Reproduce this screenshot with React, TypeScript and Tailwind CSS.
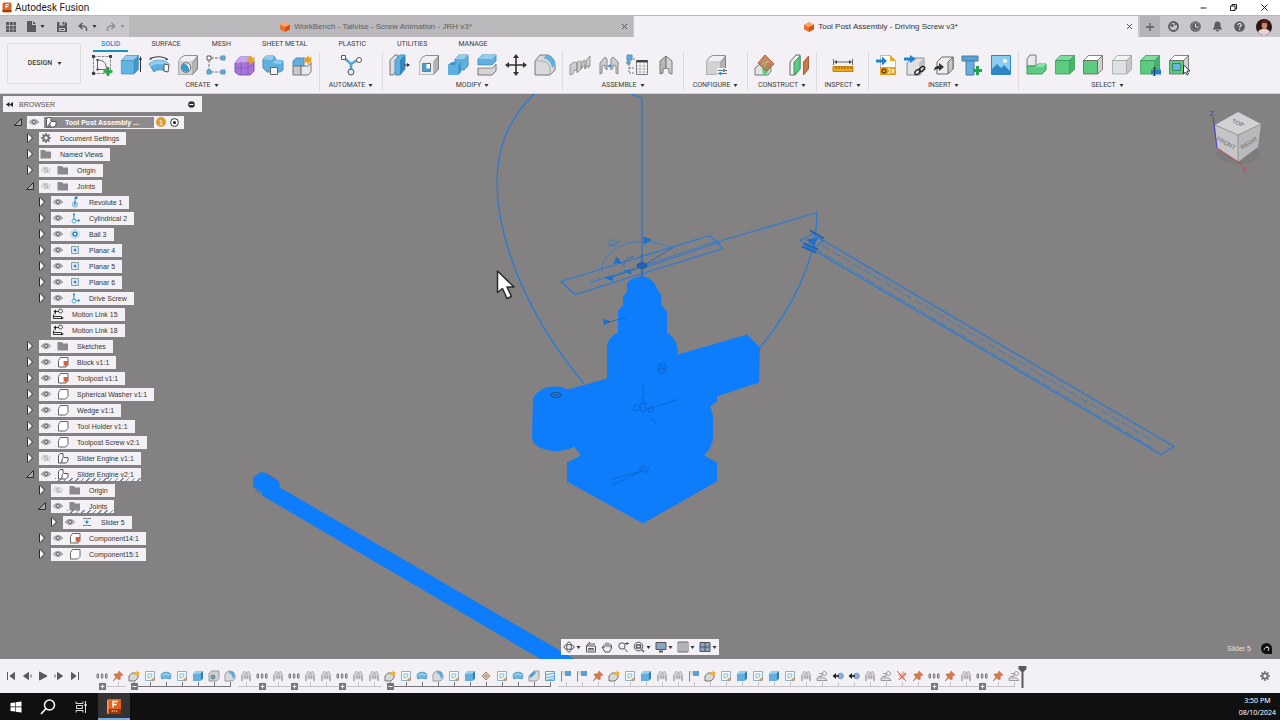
import React from "react";

type SvgProps = { size?: string; box?: string; children: React.ReactNode };

function Svg({ size = "size-[22px]", box = "0 0 22 22", children }: SvgProps) {
  return (
    <svg className={size + " shrink-0"} viewBox={box} fill="none" aria-hidden="true">
      {children}
    </svg>
  );
}

function Caret({ tone = "text-[#333]" }: { tone?: string }) {
  return (
    <svg className={"h-[3px] w-[5px] shrink-0 " + tone} viewBox="0 0 5 3" aria-hidden="true">
      <path d="M0.5 0h4L2.5 3z" fill="currentColor" />
    </svg>
  );
}

type CubeProps = { front: string; top: string; side: string; line?: string };

function Cube({ front, top, side, line = "#777" }: CubeProps) {
  return (
    <g stroke={line} strokeWidth="0.8" strokeLinejoin="round">
      <path d="M1.5 6.5 6.5 1.5h14L15.5 6.5z" fill={top} />
      <path d="M15.5 6.5l5-5v14l-5 4.5z" fill={side} />
      <path d="M1.5 6.5h14V20h-14z" fill={front} />
    </g>
  );
}

function RoundCube({ front = "#d2d2d4" }: { front?: string }) {
  return (
    <g stroke="#77777a" strokeWidth="0.8" strokeLinejoin="round">
      <path d="M1.5 8 4 3.500 7.500 1.500h13v13.500L15.500 20.500h-14z" fill="#f0f0f1" />
      <path d="M15.500 8l5-6v13l-5 5.500z" fill="#b3b3b6" />
      <path d="M1.500 8 4 7h11.500v13.500h-14z" fill={front} stroke="none" />
    </g>
  );
}

const blue = { front: "#62b4e4", top: "#93cdee", side: "#3f97cc", line: "#4a93c0" };
const green = { front: "#5ccb80", top: "#7fdc9d", side: "#46b56c", line: "#3f9a5e" };

const ribbonArt: Record<string, React.ReactNode> = {
  sketch: (
    <>
      <path d="M2.500 2.500h17v17h-17z" stroke="#888" strokeDasharray="3 1" />
      <path d="M6.500 6v9.500M6.500 6c6 0 9 3 9 9.500h-9" stroke="#666" />
      <path d="M1 1h3v3H1zM18 1h3v3h-3zM1 18h3v3H1zM5.500 5h2v2h-2zM5.500 14.500h2v2h-2z" fill="#444" />
      <path d="M17 13v9M12.500 17.500h9" stroke="#22a447" strokeWidth="2.600" />
    </>
  ),
  extrude: (
    <>
      <g transform="scale(0.900 1)">
        <Cube {...blue} />
      </g>
      <path d="M20.500 18V5" stroke="#333" />
      <path d="M19 6 20.500 2 22 6z" fill="#333" />
    </>
  ),
  revolve: (
    <>
      <path d="M1 10c4-5 16-5 20 0l-3 8c-3-3-9-3-12 0z" fill="#5fb0e0" stroke="#4a93c0" />
      <path d="M1 10c4-5 16-5 20 0l-1.500 3c-4-4-13-4-17 0z" fill="#93cdee" />
      <path d="M16 10l5 1-1 7-4-1z" fill="#fff" stroke="#555" />
      <path d="M2 5c5-3 12-3 17 0" stroke="#333" />
      <path d="M1 6l2-3 1 2zM20 6l-3 0 2-2z" fill="#333" />
    </>
  ),
  hole: (
    <>
      <RoundCube />
      <circle cx="9" cy="13.500" r="4.800" fill="#f4f8fb" stroke="#666" />
      <path d="M6.500 9.500c3 0 6 3 5.500 7.500A4.500 4.500 0 0 1 6.500 9.500z" fill="#3f97cc" />
    </>
  ),
  pattern: (
    <>
      <path d="M6 4h10M4 6v10M6 18h10" stroke="#777" strokeDasharray="3 1" />
      <path d="M2 2h4v4H2z" fill="#fff" stroke="#555" />
      <path d="M16 2h4v4h-4zM2 16h4v4H2zM16 16h4v4h-4z" fill="#5fb0e0" stroke="#4a93c0" />
    </>
  ),
  form: (
    <>
      <path d="M1 9l5-6h11l3 4v10l-4 4H5l-4-3z" fill="#a875dd" stroke="#7f52b5" />
      <path d="M1 9l5-6h11l-4 5z" fill="#c9a4f0" />
      <path d="M7 8v13M1 14h13l6-4M14 8v13" stroke="#8455bd" strokeWidth="0.800" />
      <path d="M17 1l1.200 3 3-1-1.400 3 1.400 3-3-1-1.200 3-1.200-3-3 1 1.400-3-1.400-3 3 1z" fill="#e8a020" />
    </>
  ),
  derive: (
    <>
      <path d="M1 5l3-3h8l2 4 7 1v9l-3 2H5l-4-4z" fill="#5fb0e0" stroke="#4a93c0" />
      <path d="M1 5l3-3h8l-2 4zM10 9l4-3 7 1-3 3z" fill="#93cdee" />
      <path d="M8.500 13.500h7v7h-7z" fill="#f4f4f5" stroke="#666" />
    </>
  ),
  component: (
    <>
      <path d="M2 7l3-3h8v8H2z" fill="#5fb0e0" stroke="#4a93c0" />
      <path d="M2 12h8v9H2z" fill="#c9c9cb" stroke="#777" />
      <path d="M10 12h7l3-3v9l-3 3h-7z" fill="#e9e9ea" stroke="#777" />
      <path d="M17 1l1.200 3 3-1-1.400 3 1.400 3-3-1-1.200 3-1.200-3-3 1 1.400-3-1.400-3 3 1z" fill="#e8a020" />
    </>
  ),
  automate: (
    <>
      <path d="M3 3l8 7 8-5M11 10v8" stroke="#56a5d6" strokeWidth="2.600" />
      <path d="M1.500 1.500h4v4h-4z" fill="#fff" stroke="#555" />
      <circle cx="19" cy="6" r="2.500" fill="#fff" stroke="#555" />
      <circle cx="11" cy="18" r="3" fill="#d8e9f4" stroke="#555" />
    </>
  ),
  press: (
    <>
      <path d="M1 6l5-5h3v14l-5 6H1z" fill="#dcdcde" stroke="#777" />
      <path d="M6 6l5-5h5v14l-5 6H6z" fill="#5fb0e0" stroke="#4a93c0" />
      <path d="M11 6l5-5v14l-5 6z" fill="#3487bd" />
      <path d="M15 11h5" stroke="#333" />
      <path d="M18 9l3 2-3 2z" fill="#333" />
    </>
  ),
  shell: (
    <>
      <RoundCube front="#ececed" />
      <path d="M4.500 9.500h8v8h-8z" fill="#fff" stroke="#666" />
      <path d="M4.500 9.500v8l4-3v-5zM4.500 17.500l4-3h4v3z" fill="#4a9fd2" />
    </>
  ),
  combine: (
    <>
      <path d="M8 5l4-4h9v11l-4 4H8z" fill="#5fb0e0" stroke="#4a93c0" />
      <path d="M8 5l4-4h9l-4 4z" fill="#93cdee" />
      <path d="M1 11l4-3h9v10l-3 3H1z" fill="#5fb0e0" />
      <path d="M1 11l4-3h5l-2 3zM14 8v10l-3 3V11z" fill="#3f97cc" />
    </>
  ),
  split: (
    <>
      <path d="M2 5l4-4h14v6l-4 4H2z" fill="#5fb0e0" stroke="#4a93c0" />
      <path d="M2 5l4-4h14l-4 4z" fill="#93cdee" />
      <path d="M2 14h14l4-4v7l-4 4H2z" fill="#d5d5d7" stroke="#777" />
      <path d="M0 12.500h16l5-5" stroke="#fff" strokeWidth="1.500" />
    </>
  ),
  move: (
    <>
      <path d="M11 3v16M3 11h16" stroke="#333" strokeWidth="1.600" />
      <path d="M11 0l3 4H8zM11 22l3-4H8zM0 11l4-3v6zM22 11l-4-3v6z" fill="#333" />
    </>
  ),
  fillet: (
    <>
      <path d="M1 7l5-6h8c5 2 7 6 7 10v5l-5 5H1z" fill="#dadadc" stroke="#777" />
      <path d="M9 4l4-3c5 1 8 5 8 10l-3 3c0-5-4-9-9-10z" fill="#5fb0e0" />
      <path d="M1 7h7c5 0 8 4 8 9v5" stroke="#aaa" />
    </>
  ),
  joints: (
    <path
      d="M1 21V11l4-3 3 1v8l-3-1-1 4zM8 19V8l4-1v8l2-8 2-1v9l2-10 3-3v10l-2 2v-3l-3 4v-4l-3 3z"
      fill="#cfcfd1"
      stroke="#858587"
      strokeWidth="0.800"
    />
  ),
  joint: (
    <>
      <path d="M2 20V9l5-6 2 2v11l-2-2v-3l-3 1v7z" fill="#cfcfd1" stroke="#858587" />
      <path d="M20 20V8l-5-5-2 2v11l2-2v-3l3 1v7z" fill="#cfcfd1" stroke="#858587" />
      <path d="M9 12l4-2v4z" fill="#3f97cc" />
    </>
  ),
  bom: (
    <>
      <path d="M1 1h5v5H1zM1 7h3v3H1z" fill="#5fb0e0" stroke="#4a93c0" />
      <path d="M3 10v9M3 14h5M3 19h5M7 5h3" stroke="#777" strokeDasharray="2 1" />
      <path d="M10.500 6.500h11v14h-11z" fill="#fff" stroke="#777" />
      <path d="M10.500 6h11v2.500h-11z" fill="#444" />
      <path d="M10.500 12h11M10.500 15h11M10.500 18h11M14 8v12M18 8v12" stroke="#aaa" strokeWidth="0.800" />
    </>
  ),
  rigid: (
    <>
      <path d="M5 20V7l6-5v12l-3 1v4z" fill="#b9b9bb" stroke="#777" />
      <path d="M17 20V7l-6-5v12l3 1v4z" fill="#d3d3d5" stroke="#777" />
    </>
  ),
  configure: (
    <>
      <RoundCube />
      <path d="M12 14h10v7H12z" fill="#f3f1f5" />
      <path d="M13 16.500h9M13 19.500h9" stroke="#666" />
      <path d="M18 15h2v3h-2zM14.500 18h2v3h-2z" fill="#3f97cc" />
    </>
  ),
  plane: (
    <>
      <path d="M1 14l6-5 10 1v7l-3 4H1z" fill="#e3e3e4" stroke="#777" />
      <path d="M8 13l6-3 3 3-5 8H9z" fill="#5ccb80" />
      <path d="M11 1l9 9-8 7-8-8z" fill="#c8784a" fillOpacity="0.850" stroke="#a85f38" />
      <path d="M8 10l7-3M10 13l4-6" stroke="#8fce9a" />
    </>
  ),
  midplane: (
    <>
      <path d="M2 8l6-7h4v14l-5 6H2z" fill="#f2f2f2" stroke="#666" />
      <path d="M6 8l6-6v13l-6 6z" fill="#5ccb80" stroke="#3f9a5e" />
      <path d="M15.500 8l5-6v13l-5 6z" fill="#c8784a" stroke="#a85f38" />
    </>
  ),
  measure: (
    <>
      <path d="M1.500 5v6M20.500 5v6M3 8h16" stroke="#666" />
      <path d="M2 8l3-2v4zM20 8l-3-2v4z" fill="#444" />
      <path d="M1 12.500h20v5H1z" fill="#f0a81c" stroke="#c4830d" />
      <path d="M4 13v2M7 13v2M10 13v2M13 13v2M16 13v2M19 13v2" stroke="#7a5200" />
    </>
  ),
  insertSvg: (
    <>
      <path d="M5.500 1.500h10l5 5v14h-15z" fill="#fdfdfd" stroke="#bbb" />
      <path d="M15 1l6 6h-6z" fill="#f0a81c" />
      <path d="M5 13h16v8H5z" fill="#eda11a" />
      <circle cx="9" cy="17" r="2" stroke="#6b4700" strokeWidth="1.300" />
      <path d="M13 15h2v4h-2M17 15l1 4 1-4" stroke="#fff" />
      <path d="M1 7h7" stroke="#1d84cf" strokeWidth="3" />
      <path d="M7 2.500 12 7l-5 4.500z" fill="#1d84cf" />
    </>
  ),
  insertLink: (
    <>
      <path d="M3 9l5-5h12v11l-4 6H3z" fill="#e2e2e3" stroke="#888" />
      <path d="M15 9l5-5v11l-5 5z" fill="#c0c0c2" />
      <ellipse cx="13.500" cy="18" rx="3" ry="2" transform="rotate(-40 13.500 18)" stroke="#222" strokeWidth="1.400" />
      <ellipse cx="18" cy="15" rx="3" ry="2" transform="rotate(-40 18 15)" stroke="#222" strokeWidth="1.400" />
      <path d="M0 5h7" stroke="#1d84cf" strokeWidth="3" />
      <path d="M6 1l6 4-6 4z" fill="#1d84cf" />
    </>
  ),
  insertBody: (
    <>
      <path d="M4 8l5-5h11v12l-5 5H4z" fill="#eeeeef" stroke="#666" />
      <path d="M15 8l5-5v12l-5 5z" fill="#c9c9cb" stroke="#666" />
      <path d="M1 17c0-4 2-5 5-5V9l5 4-5 4v-2c-2 0-4 0-5 2z" fill="#333" />
    </>
  ),
  fastener: (
    <>
      <path d="M1 2h16v5H1z" fill="#5d9fce" stroke="#3f7fae" />
      <path d="M5 7h8v14H5z" fill="#6caedb" stroke="#3f7fae" />
      <path d="M16.500 12v9M12 16.500h9" stroke="#22a447" strokeWidth="3" />
    </>
  ),
  image: (
    <>
      <path d="M1.500 1.500h19v19h-19z" fill="#8cccf0" stroke="#2e86c4" />
      <path d="M2 15l5-5 4 4 3-3 6 6v3H2z" fill="#2e86c4" />
      <circle cx="15" cy="7" r="2" fill="#fff" />
    </>
  ),
  selBody: (
    <>
      <path d="M2 5l3-4h6v11H2z" fill="#e9e9ea" stroke="#777" />
      <path d="M2 12h9l2-2h8v6l-4 4H2z" fill="#5ccb80" stroke="#3f9a5e" />
      <path d="M10 13l3-3h8l-3 3z" fill="#8be3a7" />
    </>
  ),
  selGreen: <Cube {...green} />,
  selFace: <Cube front="#5ccb80" top="#fff" side="#d0d0d2" line="#666" />,
  selNone: <Cube front="#dfe0e1" top="#f3f3f3" side="#c5c6c8" line="#99a59f" />,
  selRename: (
    <>
      <Cube {...green} />
      <path d="M12 15.500h10v5H12z" fill="#1d7fd6" />
      <path d="M14 14h3M15.500 14v8M14 22h3" stroke="#333" />
    </>
  ),
  selWindow: (
    <>
      <Cube front="#5ccb80" top="#fff" side="#d0d0d2" line="#666" />
      <path d="M4.500 9.500h8v7h-8z" fill="#69b6e6" stroke="#358a53" />
      <path d="M15.500 11v9l2-2 1.500 3 1.500-1-1.500-3h3z" fill="#fff" stroke="#333" />
    </>
  ),
};

type Group = { label: string; width: string; icons: [string, string][] };

const groups: Group[] = [
  {
    label: "CREATE",
    width: "w-[235px]",
    icons: [
      ["sketch", "Create Sketch"], ["extrude", "Extrude"], ["revolve", "Revolve"], ["hole", "Hole"],
      ["pattern", "Pattern"], ["form", "Create Form"], ["derive", "Derive"], ["component", "New Component"],
    ],
  },
  { label: "AUTOMATE", width: "w-[63px]", icons: [["automate", "Automated Modeling"]] },
  {
    label: "MODIFY",
    width: "w-[180px]",
    icons: [
      ["press", "Press Pull"], ["shell", "Shell"], ["combine", "Combine"],
      ["split", "Split Body"], ["move", "Move"], ["fillet", "Fillet"],
    ],
  },
  {
    label: "ASSEMBLE",
    width: "w-[121px]",
    icons: [["joints", "As-built Joint"], ["joint", "Joint"], ["bom", "Motion Study"], ["rigid", "Rigid Group"]],
  },
  { label: "CONFIGURE", width: "w-[64px]", icons: [["configure", "Configure"]] },
  { label: "CONSTRUCT", width: "w-[69px]", icons: [["plane", "Offset Plane"], ["midplane", "Midplane"]] },
  { label: "INSPECT", width: "w-[52px]", icons: [["measure", "Measure"]] },
  {
    label: "INSERT",
    width: "w-[150px]",
    icons: [
      ["insertSvg", "Insert SVG"], ["insertLink", "Insert Link"], ["insertBody", "Insert Derive"],
      ["fastener", "Insert Fastener"], ["image", "Insert Image"],
    ],
  },
  {
    label: "SELECT",
    width: "w-[178px]",
    icons: [
      ["selBody", "Select Body"], ["selGreen", "Select All"], ["selFace", "Select Face"],
      ["selNone", "Select Through"], ["selRename", "Select by Name"], ["selWindow", "Window Select"],
    ],
  },
];

function TitleBar() {
  return (
    <header className="flex h-[15px] shrink-0 items-center bg-white pl-[2px]">
      <Svg size="size-[11px]" box="0 0 11 11">
        <rect x="0.5" y="0.5" width="9" height="10" rx="1.500" fill="#e2641c" />
        <path d="M.5 8h9v2h-9z" fill="#a83d06" />
        <path d="M4 6.500v-4h3M4 4.500h2.500" stroke="#fff" />
      </Svg>
      <span className="ml-[2px] text-[10px] leading-[14px] text-[#1a1a1a]">Autodesk Fusion</span>
      <div className="ml-auto flex">
        <button aria-label="Minimize" className="grid w-[30px] place-items-center">
          <Svg size="size-[9px]" box="0 0 9 9"><path d="M1.500 5h6" stroke="#222" /></Svg>
        </button>
        <button aria-label="Restore" className="grid w-[30px] place-items-center">
          <Svg size="size-[9px]" box="0 0 9 9">
            <path d="M1.500 3h4.500v4.500H1.500zM3 3V1.500h4.500V6H6" stroke="#222" />
          </Svg>
        </button>
        <button aria-label="Close" className="grid w-[32px] place-items-center">
          <Svg size="size-[9px]" box="0 0 9 9"><path d="M1.500 1.500l6 6M7.500 1.500l-6 6" stroke="#222" /></Svg>
        </button>
      </div>
    </header>
  );
}

function DocCube() {
  return (
    <Svg size="size-[10px]" box="0 0 10 10">
      <path d="M0 2.500 5 0l5 2.500L5 5z" fill="#ffa367" />
      <path d="M0 2.500 5 5v5L0 7.500z" fill="#f0702a" />
      <path d="M10 2.500 5 5v5l5-2.500z" fill="#d4530f" />
    </Svg>
  );
}

function DocTab({ title, active }: { title: string; active?: boolean }) {
  return (
    <div className={"flex min-w-0 flex-1 items-center pl-2 " + (active ? "bg-[#f3f1f5] text-[#333]" : "mr-px bg-[#bab8bb] text-[#606060]")}>
      <button
        role="tab"
        aria-selected={!!active}
        className="flex min-w-0 flex-1 items-center justify-center gap-[4px] font-['Liberation_Sans',Arial,sans-serif] text-[8px] leading-[12px] whitespace-nowrap"
      >
        <DocCube />
        {title}
      </button>
      <button aria-label={"Close " + title} className="grid w-[18px] place-items-center">
        <Svg size="size-[7px]" box="0 0 7 7"><path d="M1 1l5 5M6 1l-5 5" stroke="#555" /></Svg>
      </button>
    </div>
  );
}

function TabBar() {
  return (
    <nav className="flex h-[22px] shrink-0 border-t border-[#b9b7bb] bg-[#c9c7cb]">
      <div className="flex w-[129px] shrink-0 items-center pl-[6px] text-[#5c5a5e]">
        <button aria-label="Data Panel" className="mr-[11px]">
          <Svg size="size-[10px]" box="0 0 10 10">
            <path d="M0 0h3v3H0zM3.700 0h3v3h-3zM7.300 0h3v3h-3zM0 3.700h3v3H0zM3.700 3.700h3v3h-3zM7.300 3.700h3v3h-3zM0 7.300h3v3H0zM3.700 7.300h3v3h-3zM7.300 7.300h3v3h-3z" fill="currentColor" />
          </Svg>
        </button>
        <button aria-label="File" className="mr-[12px] flex items-center gap-[4px]">
          <Svg size="h-[11px] w-[9px]" box="0 0 9 11">
            <path d="M0 0h5v4h4v7H0zM6 0l3 3H6z" fill="currentColor" />
          </Svg>
          <Caret />
        </button>
        <button aria-label="Save" className="mr-[11px]">
          <Svg size="size-[10px]" box="0 0 10 10">
            <path d="M0 0h8.500L10 1.500V10H0z" fill="currentColor" />
            <path d="M2.500 0h5v3.500h-5zM2 6h6v3H2z" fill="#c9c7cb" />
            <path d="M5.500 0H7v2.500H5.500zM3 7h4v1H3z" fill="currentColor" />
          </Svg>
        </button>
        <button aria-label="Undo" className="mr-[9px] flex items-center gap-[4px]">
          <Svg size="size-[10px]" box="0 0 10 10">
            <path d="M4.500 1 1.200 4l3.300 3M1.500 4h3C8 4 9 6 8.500 9" stroke="currentColor" strokeWidth="1.500" />
          </Svg>
          <Caret />
        </button>
        <button aria-label="Redo" className="flex items-center gap-[4px] text-[#8f8d91]">
          <Svg size="size-[10px]" box="0 0 10 10">
            <path d="M5.500 1 8.800 4 5.500 7M8.500 4h-3C2 4 1 6 1.500 9" stroke="currentColor" strokeWidth="1.500" />
          </Svg>
          <Caret tone="text-[#8f8d91]" />
        </button>
      </div>
      <div role="tablist" className="flex min-w-0 flex-1">
        <DocTab title="WorkBench - Tailvise - Screw Animation - JRH v3*" />
        <DocTab title="Tool Post Assembly - Driving Screw v3*" active />
      </div>
      <div className="flex w-[142px] shrink-0 items-center gap-[11px] pl-[2px] text-[#5c5a5e]">
        <button aria-label="New Tab" className="-mr-[3px] grid w-[20px] place-items-center self-stretch bg-[#b5b3b7]">
          <Svg size="size-[10px]" box="0 0 10 10"><path d="M5 1v8M1 5h8" stroke="#5c5a5e" strokeWidth="1.300" /></Svg>
        </button>
        <button aria-label="Extensions">
          <Svg size="size-[11px]" box="0 0 11 11">
            <circle cx="5.500" cy="5.500" r="4.500" stroke="currentColor" strokeWidth="1.800" />
            <path d="M2 3l4 .500L5 6H3zM7 1.500 9 4 6.500 4.500z" fill="currentColor" />
          </Svg>
        </button>
        <button aria-label="Job Status">
          <Svg size="size-[11px]" box="0 0 11 11">
            <circle cx="5.500" cy="5.500" r="5.300" fill="currentColor" />
            <circle cx="5.500" cy="5.500" r="3.800" stroke="#a5a3a7" strokeWidth="0.700" />
            <path d="M5.500 3v3H8" stroke="#eee" />
          </Svg>
        </button>
        <button aria-label="Notifications">
          <Svg size="size-[11px]" box="0 0 11 11">
            <path d="M5.500 0.500c-2 0-3 1.500-3 3.500C2.500 7 1 7 1 8.500h9C10 7 8.500 7 8.500 4c0-2-1-3.500-3-3.500zM4 9h3c0 2-3 2-3 0z" fill="currentColor" />
          </Svg>
        </button>
        <button aria-label="Help">
          <Svg size="size-[11px]" box="0 0 11 11">
            <circle cx="5.500" cy="5.500" r="5.300" fill="currentColor" />
            <path d="M3.800 4.300c0-2.500 3.500-2.300 3.500-.2 0 1.200-1.700 1.200-1.700 2.600M5.600 7.800v1.200" stroke="#eee" strokeWidth="1.200" />
          </Svg>
        </button>
        <button aria-label="Account">
          <Svg size="size-[16px]" box="0 0 16 16">
            <circle cx="8" cy="8" r="8" fill="#2a1512" />
            <path d="M2 13.300C3 10 6 10 8 10s5 0 6 3.300A8 8 0 0 1 2 13.300z" fill="#e6d5d2" />
            <ellipse cx="8.500" cy="6.500" rx="2.800" ry="3.800" fill="#c98873" />
            <path d="M4 4l3-3h4l2 3z" fill="#5a1e18" />
          </Svg>
        </button>
      </div>
    </nav>
  );
}

const workspaces = ["SOLID", "SURFACE", "MESH", "SHEET METAL", "PLASTIC", "UTILITIES", "MANAGE"];

function Ribbon() {
  return (
    <section className="flex h-[57px] shrink-0 border-b border-[#d6d4d8] bg-[#f3f1f5] text-[7px] leading-[9px] text-[#3c3c3c]">
      <div className="w-[85px] shrink-0 pt-[6px] pl-[7px]">
        <button className="flex h-[41px] w-[74px] items-center justify-center gap-[5px] rounded-[2px] border border-[#dddbdf] pl-[2px] font-medium">
          DESIGN <Caret />
        </button>
      </div>
      <div className="flex min-w-0 flex-1 flex-col">
        <div role="tablist" className="flex h-[15px] gap-[15px] pl-[8px]">
          {workspaces.map((name, i) => (
            <button
              key={name}
              role="tab"
              aria-selected={i === 0}
              className={"border-b-2 px-2 pt-[2px] whitespace-nowrap " + (i === 0 ? "border-[#1a8fc4] font-medium text-[#1a8fc4]" : "border-transparent")}
            >
              {name}
            </button>
          ))}
        </div>
        <div className="flex flex-1 pb-[3px]">
          {groups.map((group) => (
            <div key={group.label} className={"flex shrink-0 flex-col border-r border-[#dddbdf] last:border-r-transparent " + group.width}>
              <div className={"flex px-[6px] pt-[2px] " + (group.icons.length > 1 ? "justify-between" : "justify-center")}>
                {group.icons.map(([id, name]) => (
                  <button key={id} aria-label={name} title={name}>
                    <Svg>{ribbonArt[id]}</Svg>
                  </button>
                ))}
              </div>
              <button className="mt-[5px] flex items-center justify-center gap-[3px] whitespace-nowrap">
                {group.label} <Caret />
              </button>
            </div>
          ))}
        </div>
      </div>
    </section>
  );
}

const treeArt: Record<string, React.ReactNode> = {
  gear: (
    <>
      <circle cx="6" cy="6" r="2.600" stroke="#6f6d71" strokeWidth="1.800" />
      <path d="M6 1v2M6 9v2M1 6h2M9 6h2M2.500 2.500l1.400 1.400M8.100 8.100l1.400 1.400M9.500 2.500 8.100 3.900M3.900 8.100 2.500 9.500" stroke="#6f6d71" strokeWidth="1.500" />
    </>
  ),
  folder: <path d="M.5 2h4.500l1 1.500h5v7H.5z" fill="#8b898d" />,
  revolute: (
    <>
      <circle cx="6" cy="8.500" r="2.600" stroke="#5ba9d6" />
      <path d="M6 8V1.500" stroke="#2784c2" />
      <path d="M6 .500h2.500v2.500H6z" fill="#2784c2" />
      <circle cx="6" cy="8.500" r="1" fill="#2784c2" />
    </>
  ),
  cylindrical: (
    <>
      <circle cx="5" cy="9" r="2" stroke="#5ba9d6" />
      <path d="M5 8V2" stroke="#2784c2" />
      <path d="M3.800 3 5 .500 6.200 3zM9 7l2.500 1.500L9 10z" fill="#2784c2" />
      <path d="M7 8.500h2" stroke="#5ba9d6" />
    </>
  ),
  ball: (
    <>
      <circle cx="6" cy="6" r="4.300" stroke="#a9d1ea" />
      <circle cx="6" cy="6" r="2" stroke="#2784c2" strokeWidth="1.500" />
    </>
  ),
  planar: (
    <>
      <path d="M2.500 2.500h7v7h-7z" fill="#dfe9f0" stroke="#8aa0ae" />
      <path d="M6 3.500v5M3.500 6h5" stroke="#9cc7e2" strokeWidth="0.800" />
      <path d="M5 5h2v2H5z" fill="#2784c2" />
    </>
  ),
  slider: (
    <>
      <path d="M2 2.500h8M2 9.500h8" stroke="#778" />
      <path d="M6 2v8M3 4l2 2-2 2" stroke="#9fd5dd" />
      <path d="M5 4.500 8 6 5 7.500z" fill="#1c7f94" />
    </>
  ),
  link: (
    <>
      <path d="M3 3.500h4M1.500 8.500h8M1.500 6.500v4h8M3 4.500v2" stroke="#333" />
      <circle cx="8.500" cy="3" r="2" stroke="#555" />
      <path d="M4 1.500 1.500 3.500 4 5.500zM9 8.500l3 1.500-3 1.500z" fill="#222" />
    </>
  ),
  body: <path d="M1.500 4.500 3.500 1.500h7.500V8.500L8.500 11h-7z" fill="#fff" stroke="#666" strokeLinejoin="round" />,
  pinned: (
    <>
      <path d="M1.500 4.500 3.500 1.500h7.500V8.500L8.500 11h-7z" fill="#fff" stroke="#666" strokeLinejoin="round" />
      <path d="M6.500 5h4.500v2l-.5 1 1 1.500H9.200v2h-1v-2H6L7 8l-.5-1z" fill="#d2603f" />
    </>
  ),
  assembly: (
    <path d="M1.500 11V3.500l1.500-2H6V5M1.500 11h3.500M5 11V7l1.500-1.500H11V9l-2 2z" fill="#fff" stroke="#555" strokeLinejoin="round" />
  ),
};

function Eye({ off }: { off?: boolean }) {
  return (
    <Svg size="h-[8px] w-[10px]" box="0 0 10 8">
      <path
        d="M.5 4C2.500.800 7.500.800 9.500 4 7.500 7.200 2.500 7.200.500 4z"
        fill={off ? "none" : "#b3b1b5"}
        stroke={off ? "#bcbabe" : "#98969a"}
      />
      <circle cx="5" cy="4" r="1.600" stroke={off ? "#bcbabe" : "#6b696d"} fill={off ? "none" : "#dddbdf"} />
      {off && <path d="M1.500 1l7 6" stroke="#bcbabe" />}
    </Svg>
  );
}

function Arrow({ open }: { open?: boolean }) {
  return (
    <button aria-label={open ? "Collapse" : "Expand"} className="shrink-0">
      <Svg size="h-[10px] w-[8px]" box="0 0 8 10">
        {open ? (
          <path d="M7.500 1.500v7h-7z" fill="#aaa8ac" stroke="#2b2b2b" />
        ) : (
          <path d="M1.500 .800h1L6.500 5l-4 4.200h-1z" fill="#fff" stroke="#2b2b2b" />
        )}
      </Svg>
    </button>
  );
}

type Node = {
  level: 1 | 2 | 3;
  label: string;
  icon: string;
  eye?: "on" | "off";
  arrow?: "open" | "closed";
  hatch?: boolean;
};

const nodes: Node[] = [
  { level: 1, label: "Document Settings", icon: "gear", arrow: "closed" },
  { level: 1, label: "Named Views", icon: "folder", arrow: "closed" },
  { level: 1, label: "Origin", icon: "folder", eye: "off", arrow: "closed" },
  { level: 1, label: "Joints", icon: "folder", eye: "off", arrow: "open" },
  { level: 2, label: "Revolute 1", icon: "revolute", eye: "on", arrow: "closed" },
  { level: 2, label: "Cylindrical 2", icon: "cylindrical", eye: "on", arrow: "closed" },
  { level: 2, label: "Ball 3", icon: "ball", eye: "on", arrow: "closed" },
  { level: 2, label: "Planar 4", icon: "planar", eye: "on", arrow: "closed" },
  { level: 2, label: "Planar 5", icon: "planar", eye: "on", arrow: "closed" },
  { level: 2, label: "Planar 6", icon: "planar", eye: "on", arrow: "closed" },
  { level: 2, label: "Drive Screw", icon: "cylindrical", eye: "on", arrow: "closed" },
  { level: 2, label: "Motion Link 15", icon: "link" },
  { level: 2, label: "Motion Link 18", icon: "link" },
  { level: 1, label: "Sketches", icon: "folder", eye: "on", arrow: "closed" },
  { level: 1, label: "Block v1:1", icon: "pinned", eye: "on", arrow: "closed" },
  { level: 1, label: "Toolpost v1:1", icon: "pinned", eye: "on", arrow: "closed" },
  { level: 1, label: "Spherical Washer v1:1", icon: "body", eye: "on", arrow: "closed" },
  { level: 1, label: "Wedge v1:1", icon: "body", eye: "on", arrow: "closed" },
  { level: 1, label: "Tool Holder v1:1", icon: "body", eye: "on", arrow: "closed" },
  { level: 1, label: "Toolpost Screw v2:1", icon: "body", eye: "on", arrow: "closed" },
  { level: 1, label: "Slider Engine v1:1", icon: "assembly", eye: "off", arrow: "closed" },
  { level: 1, label: "Slider Engine v2:1", icon: "assembly", eye: "on", arrow: "open", hatch: true },
  { level: 2, label: "Origin", icon: "folder", eye: "off", arrow: "closed" },
  { level: 2, label: "Joints", icon: "folder", eye: "on", arrow: "open", hatch: true },
  { level: 3, label: "Slider 5", icon: "slider", eye: "on", arrow: "closed" },
  { level: 2, label: "Component14:1", icon: "pinned", eye: "on", arrow: "closed" },
  { level: 2, label: "Component15:1", icon: "body", eye: "on", arrow: "closed" },
];

const indent = { 1: "pl-[23px]", 2: "pl-[35px]", 3: "pl-[47px]" };

function TreeRow({ node }: { node: Node }) {
  return (
    <li className={"flex h-4 items-center gap-[5px] " + indent[node.level]}>
      {node.arrow ? <Arrow open={node.arrow === "open"} /> : <span className="w-[8px]" />}
      <div className="relative flex h-[13px] items-center bg-[#f3f1f5] pr-[7px] pl-px whitespace-nowrap">
        {node.eye && (
          <button aria-label={"Toggle " + node.label} className="mr-[6px] ml-px">
            <Eye off={node.eye === "off"} />
          </button>
        )}
        <Svg size="size-[12px]" box="0 0 12 12">{treeArt[node.icon]}</Svg>
        <span className="ml-[8px]">{node.label}</span>
        {node.hatch && (
          <span className="absolute right-0 bottom-0 left-[16px] h-[3px] bg-[repeating-linear-gradient(135deg,#7b8794_0_1px,transparent_1px_4px)]" />
        )}
      </div>
    </li>
  );
}

function Browser() {
  return (
    <aside className="relative ml-[3px] w-[199px] pt-[2px] text-[7px] leading-[9px] text-[#333]">
      <div className="mb-[2px] flex h-4 items-center bg-[#f3f1f5] pr-[7px] pl-[3px]">
        <button aria-label="Hide browser">
          <Svg size="h-[5px] w-[7px]" box="0 0 7 5"><path d="M3.500 0v5L0 2.500zM7 0v5L3.500 2.500z" fill="#222" /></Svg>
        </button>
        <span className="ml-[6px] text-[#555]">BROWSER</span>
        <button aria-label="Minimize browser" className="ml-auto">
          <Svg size="size-[7px]" box="0 0 7 7">
            <circle cx="3.500" cy="3.500" r="3.300" fill="#333" />
            <path d="M1.500 3.500h4" stroke="#fff" />
          </Svg>
        </button>
      </div>
      <ul>
        <li className="flex h-4 items-center gap-[5px] pl-[11px]">
          <Arrow open />
          <div className="flex h-[13px] items-center bg-[#f3f1f5] pr-[5px] pl-[2px]">
            <button aria-label="Toggle Tool Post Assembly" className="mr-[5px]"><Eye /></button>
            <span className="flex h-[11px] w-[110px] items-center bg-[#8d8b8f] pl-px font-bold whitespace-nowrap text-white">
              <Svg size="size-[12px]" box="0 0 12 12">{treeArt.assembly}</Svg>
              <span className="ml-[8px]">Tool Post Assembly ...</span>
            </span>
            <span className="ml-[2px] grid size-[10px] place-items-center rounded-full bg-[#d9a12b] text-white">1</span>
            <button aria-label="Activate" className="ml-[4px]">
              <Svg size="size-[9px]" box="0 0 9 9">
                <circle cx="4.500" cy="4.500" r="3.900" stroke="#333" fill="#fff" />
                <circle cx="4.500" cy="4.500" r="1.600" fill="#222" />
              </Svg>
            </button>
          </div>
        </li>
        {nodes.map((node, i) => (
          <TreeRow key={i} node={node} />
        ))}
      </ul>
    </aside>
  );
}

function Model() {
  return (
    <svg className="absolute inset-0 h-full w-full" viewBox="0 94 1280 566" preserveAspectRatio="xMidYMid slice" fill="none" aria-label="Tool post assembly model">
      <g stroke="#2b7bd3" strokeWidth="1.300">
        <path d="M536 93C508 118 497 150 497 184C498 245 530 320 584 384" />
        <path d="M628 93l14 6v180" />
        <path d="M722 241 817 213C817 262 790 312 760 348" />
        <path d="M561 282l149-46 13 13-148 46z" />
        <path d="M642 267l77-26M642 269l80-27M590 283l52-16" strokeWidth="1" />
        <path d="M818 238l356 209-13 8L806 246z" />
        <path d="M822 246l330 195M815 249l337 199" strokeDasharray="9 3" strokeWidth="0.800" />
        <path d="M602 273c-2-12 8-24 29-30 14-2 28-1 42 6" strokeWidth="0.800" />
        <path d="M673 248l-31 19-34 12M624 267c-1-6 4-9 10-10" stroke="#2466b0" strokeWidth="0.900" />
        <path d="M610 240l9 3-4 4-6-3zM608 247l13-5" strokeWidth="0.700" />
        <path d="M800 241l14-7 9 8-12 8z" />
        <path d="M810 231l14 8M802 247l14 6M804 244l14 6" stroke="#1e65b5" strokeWidth="2" />
      </g>
      <path d="M643 237l9 3-8 5zM613 264l4-7 5 7zM604 278l9-2v6zM623 271l8-1v5zM603 319l8 3-7 4zM806 240l12-2-4 9z" fill="#1f70c9" />
      <path
        fill="#0d7dfc"
        d="M627 284C631 279 637 277 643 277C651 278 655 283 658 291C662 295 662 300 661 305L667 312V333C674 337 678 344 678 355L747 335L760 348L759 383L717 397V402L710 407C713 412 713 417 713 424V437C713 445 709 451 704 456L717 463V482L643 524L567 482V463L581 456L574 447C565 453 545 454 534 444L532 438L533 400C536 391 545 387 555 387C561 387 565 388 568 390L607 379V347C608 340 612 336 618 333V311L623 306V296L627 293Z"
      />
      <path fill="#0d7dfc" d="M253 478l9-6 17 10 1 6 297 173h-34L262 496v-3l-9-6z" />
      <g stroke="#0a57b4" strokeWidth="0.700" strokeOpacity="0.800">
        <path d="M607 323l19-5M643 385v18M646 410l32-10M650 418l9 8M612 486l31-15M610 480l30-8M642 254v24" />
        <path d="M633 411c0-4 4-8 6-5s-1 6-6 5M640 404h6l-1 8h-4zM641 399l4 4M648 412c0-4 4-6 5-3s-1 4-5 3M658 372l1-7 6-1 1 6-4 4zM660 365l6 8M657 370l11-2" />
        <path d="M639 469l5-3 5 3-4 5zM641 467l6 6M266 474l10 6M255 490l6 4" />
        <ellipse cx="556" cy="395.500" rx="5" ry="2.500" stroke="#333" />
        <path d="M552 394l8 3M552 397l8-3" stroke="#444" />
        <ellipse cx="642" cy="266" rx="5" ry="3" fill="#1f63b0" />
      </g>
      <path d="M497.500 271.500v21.500l5-4 4.500 10 4.500-2-4.500-9.500h7z" fill="#fff" stroke="#2b2b2b" strokeWidth="1.500" strokeLinejoin="round" />
    </svg>
  );
}

function ViewCube() {
  return (
    <svg className="absolute top-[12px] right-[14px] h-[68px] w-[60px]" viewBox="1206 106 60 68" fill="none" aria-label="View cube">
      <ellipse cx="1238" cy="154" rx="22" ry="10" fill="#6f6d6f" opacity="0.350" />
      <path d="M1238 112l23 12-23 11-23-10z" fill="#d2d1d3" />
      <path d="M1215 125l23 10v27l-21-14z" fill="#c5c4c6" />
      <path d="M1238 135l23-11-3 23-20 15z" fill="#b9b8ba" />
      <path d="M1215 125l23 10 23-11M1238 135v27" stroke="#8d8b8d" strokeWidth="0.800" />
      <path d="M1213 117l4 31" stroke="#4a3fc4" />
      <path d="M1217 148l26 17" stroke="#b34a52" />
      <g fill="#666" fontSize="6" textAnchor="middle">
        <text x="1238" y="125" transform="rotate(22 1238 123)">TOP</text>
        <text x="1226" y="145" transform="rotate(28 1226 143)">FRONT</text>
        <text x="1249" y="145" transform="rotate(-30 1249 143)">RIGHT</text>
      </g>
      <g fontSize="8" textAnchor="middle">
        <text x="1212" y="116" fill="#4a3fc4">Z</text>
        <text x="1245" y="172" fill="#d23b4b">X</text>
      </g>
    </svg>
  );
}

type NavItem = { name: string; caret?: boolean; art: React.ReactNode };

const navItems: NavItem[] = [
  { name: "Orbit", caret: true, art: <><ellipse cx="6" cy="6" rx="2.300" ry="5" /><ellipse cx="6" cy="6" rx="5" ry="2.300" /><path d="M6 4.500v3" stroke="#f3f1f5" /></> },
  { name: "Look At", art: <><path d="M1.500 5h9v6h-9zM3 3h7M3.500 7.500h5v1.500h-5z" /><path d="M3 3 5 1M1.500 5 3 3" /></> },
  { name: "Pan", art: <path d="M3 7V3.500M5 6V1.500M7 6V1.500M9 6.500V2.500M3 7 1 5.500M1 6l3 5h4.500L10.500 7V4" /> },
  { name: "Zoom", art: <><circle cx="5" cy="5" r="3.200" /><path d="M7.500 7.500 10.500 11M8 2.500h4M10 1v3" /></> },
  { name: "Fit", caret: true, art: <><circle cx="5.500" cy="5.500" r="4.300" /><path d="M3.500 4h4v3h-4zM8.500 8.500 11 11" strokeWidth="1.400" /></> },
  { name: "Display Settings", caret: true, art: <><path d="M1 1.500h10v7H1z" fill="#8ba3c9" /><path d="M4 10.500h4" strokeWidth="2" /></> },
  { name: "Grid and Snaps", caret: true, art: <path d="M1 1h10v10H1zM3 1v10M5 1v10M7 1v10M9 1v10" strokeWidth="0.800" /> },
  { name: "Viewports", caret: true, art: <path d="M1 1.500h10v9H1zM6 1.500v9M1 6h10" fill="#8ba3c9" /> },
];

function NavBar() {
  return (
    <div className="absolute bottom-[4px] left-1/2 flex h-[16px] w-[158px] -translate-x-1/2 items-center justify-between bg-[#f3f1f5] px-[2px]">
      {navItems.map((item) => (
        <button key={item.name} aria-label={item.name} className="flex items-center gap-px">
          <Svg size="size-[12px]" box="0 0 12 12"><g stroke="#555">{item.art}</g></Svg>
          {item.caret && <Caret />}
        </button>
      ))}
    </div>
  );
}

const miniArt: Record<string, React.ReactNode> = {
  more: <path d="M1 4h1.500v4H1zM5.300 4h1.500v4H5.300zM9.500 4H11v4H9.500z" stroke="#777" />,
  pin: <path d="M7 1l4 4-1.500.5L8 7l.5 2-1.500 1-2-2-4 3 3-4-2-2 1-1.500 2 .5L6.500 2.500z" fill="#d07a48" stroke="#b56b40" strokeWidth="0.500" />,
  comp: (
    <>
      <path d="M1 6l3-3h6v5l-3 3H1z" fill="#d8d8da" stroke="#777" />
      <path d="M9 0l.8 2 2-.3L10.600 3.400 11.800 5l-2-.3L9 6.500 8.200 4.700l-2 .3 1.200-1.600L6.200 1.700l2 .3z" fill="#efb02c" />
    </>
  ),
  sketch: (
    <>
      <path d="M1.500 1.500h9v9h-9z" fill="#f4f8fb" stroke="#8fb0c6" />
      <path d="M4 4v4M4 4h4M4 8c3 0 4-1 4-4" stroke="#6fb0d9" strokeWidth="0.800" />
      <path d="M7 10l3-3 1.200 1.200-3 3z" fill="#e58f3c" />
    </>
  ),
  revolve: (
    <>
      <path d="M1 4.500c3-3 7.500-3 10 0l-.8 4.500c-3-1.200-5.400-1.200-8.400 0z" fill="#6db9e6" stroke="#4f9dcd" />
      <path d="M1.500 5.500c3-2 6-2 9 0" stroke="#b4def5" />
    </>
  ),
  extrude: (
    <>
      <path d="M1 3.500 3.500 1H11L8.500 3.500z" fill="#93cdee" />
      <path d="M1 3.500h7.500V11H1z" fill="#5fb0e0" />
      <path d="M8.500 3.500 11 1v7.500L8.500 11z" fill="#2f7fb5" />
    </>
  ),
  hole: (
    <>
      <path d="M1 3.500 3.500 1H11v7.500L8.500 11H1z" fill="#d2d2d4" stroke="#999" />
      <circle cx="5" cy="7" r="2" fill="#5fb0e0" stroke="#777" />
    </>
  ),
  fillet: (
    <>
      <path d="M1 4l3-3h3c3 1 4 3 4 6v1.500L8.500 11H1z" fill="#dadadc" stroke="#999" />
      <path d="M6 1c4 0 5 3 5 6L8.500 8.500C8.500 5 7 3.500 4.500 3z" fill="#5badde" />
    </>
  ),
  joint: <path d="M1.500 11V5l3-4L6 2.500V9L4.500 8V6L3 6.500V10zM10.500 11V5l-2-4L7 2.500V9L8 8V6l1.300.5V10z" fill="#d6d6d8" stroke="#9a9a9c" strokeWidth="0.700" />,
  plane: <path d="M6 2 10 6 6 10 2 6zM6 4.500v3M4.500 6h3" fill="#e8c2a8" stroke="#a08876" />,
  chamfer: (
    <>
      <path d="M1 6l5-5h5v7.500L8.500 11H1z" fill="#dadadc" stroke="#999" />
      <path d="M1 6l5-5 2 2-5 5z" fill="#4fa3d6" />
    </>
  ),
  thread: <path d="M1.500 1.500h9v9h-9zM1.500 5l9-2M1.500 8l9-2M2 10.500l8.500-2" stroke="#5ea6d2" fill="#e8f3fa" />,
  flag: (
    <>
      <path d="M1.500 1v10.500" stroke="#888" />
      <path d="M2 1h3v4H2z" fill="#ddd" />
      <path d="M5 1h6v5H5z" fill="#4fa3d6" />
    </>
  ),
  link: (
    <>
      <path d="M1 8h8l2 2.500H1zM3 3.500h3v3H2" stroke="#9a9a9c" fill="#e8e8ea" />
      <circle cx="8.500" cy="3.500" r="2" stroke="#9a9a9c" />
    </>
  ),
  drive: (
    <>
      <circle cx="8.500" cy="6" r="2.800" fill="#8fb0dd" stroke="#7a95c0" />
      <path d="M3 6h4" stroke="#222" strokeWidth="1.600" />
      <path d="M4 3v6L.500 6z" fill="#222" />
    </>
  ),
  unpin: (
    <>
      <path d="M7 1l4 4-3 2 .5 2-1.500 1-2-2-3 2 2-3-2-2 1-1.500 2 .5z" fill="#e6b7a2" />
      <path d="M1 1l9 10M3 10l7-7" stroke="#c0605a" />
    </>
  ),
};

const timeline: string[] =
  "more pin comp sketch revolve sketch extrude hole fillet joint more joint more joint joint more joint joint comp sketch revolve fillet sketch extrude plane sketch revolve chamfer thread flag flag pin comp sketch extrude joint joint flag comp sketch extrude sketch extrude sketch joint link drive drive joint link unpin pin more pin joint more pin link".split(" ");

const openGroups: [number, number][] = [[2, 8], [18, 28]];

function TimelineItem({ id, index }: { id: string; index: number }) {
  const span = openGroups.find(([a, b]) => index >= a && index <= b);
  const dark = !!span;
  const isStart = index === 0 || (!!span && span[0] === index);
  const isEnd = index === timeline.length - 1 || (!!span && span[1] === index);
  const marker = id === "more" ? "+" : isStart ? "-" : "";
  return (
    <li className="flex w-4 shrink-0 flex-col items-center">
      <button aria-label={id + " " + (index + 1)}>
        <Svg size="size-[12px]" box="0 0 12 12">{miniArt[id]}</Svg>
      </button>
      <svg className="h-[8px] w-4" viewBox="0 0 16 8" fill="none" aria-hidden="true">
        <path d={isEnd ? "M0 4.500H9" : isStart ? "M8 4.500H16" : "M0 4.500H16"} stroke={dark ? "#77757a" : "#c6c4c8"} />
        <path d="M8.500 0v4.500" stroke={dark ? "#77757a" : "#c6c4c8"} />
        {marker && (
          <>
            <path d="M5 1h7v7H5z" fill="#77757a" />
            <path d={marker === "+" ? "M8.500 2.500v4M6.500 4.500h4" : "M6.500 4.500h4"} stroke="#fff" />
          </>
        )}
      </svg>
    </li>
  );
}

const playback: [string, string][] = [
  ["First", "M1.500 1v8M8.500 1.500v7L4 5z"],
  ["Step back", "M6.500 1.500v7L1.500 5zM9 3.500v3"],
  ["Play", "M1.500 1v8L9 5z"],
  ["Step forward", "M3.500 1.500v7l5-3.500zM1 3.500v3"],
  ["Last", "M8.500 1v8M1.500 1.500v7L6 5z"],
];

function Timeline() {
  return (
    <section className="flex h-[34px] shrink-0 items-start bg-[#f3f1f5] pr-[9px] pl-[6px]">
      <div className="flex w-[88px] shrink-0 gap-[6px] pt-[12px]">
        {playback.map(([name, d]) => (
          <button key={name} aria-label={name}>
            <Svg size="h-[10px] w-[10px]" box="0 0 10 10"><path d={d} fill="#5c5a5e" stroke="#5c5a5e" /></Svg>
          </button>
        ))}
      </div>
      <ol className="flex pt-[11px]">
        {timeline.map((id, i) => (
          <TimelineItem key={i} id={id} index={i} />
        ))}
      </ol>
      <svg className="-ml-[4px] mt-[7px] h-[22px] w-[9px] shrink-0" viewBox="0 0 9 22" aria-hidden="true">
        <path d="M.5 0h8v3L5.500 6v16h-2V6L.500 3z" fill="#5c5a5e" />
      </svg>
      <button aria-label="Timeline settings" className="mt-[11px] ml-auto">
        <Svg size="size-[12px]" box="0 0 12 12">{treeArt.gear}</Svg>
      </button>
    </section>
  );
}

function Taskbar() {
  return (
    <footer className="flex h-[27px] shrink-0 bg-[#101010] text-white">
      <button aria-label="Start" className="grid w-[32px] place-items-center">
        <Svg size="size-[12px]" box="0 0 12 12">
          <path d="M.5 2 5 1.400v4.200H.5zM5.600 1.300 11.500.500v5.100H5.600zM.5 6.300H5v4.300L.5 10zM5.600 6.300h5.900v5.200l-5.900-.8z" fill="#fff" />
        </Svg>
      </button>
      <button aria-label="Search" className="grid w-[32px] place-items-center">
        <Svg size="size-[16px]" box="0 0 16 16">
          <circle cx="9.500" cy="6" r="5" stroke="#fff" strokeWidth="1.500" />
          <path d="M6 9.500 1 15" stroke="#fff" strokeWidth="1.700" />
        </Svg>
      </button>
      <button aria-label="Task View" className="grid w-[34px] place-items-center">
        <Svg size="size-[12px]" box="0 0 12 12">
          <path d="M1 .500v2h7v-2M1.500 4.500h6v3h-6zM1 11.500v-2h7v2M10.500 0v12" stroke="#ddd" />
          <path d="M9.500 3h2v2h-2z" fill="#fff" />
        </Svg>
      </button>
      <button aria-label="Autodesk Fusion" className="grid w-[32px] place-items-center border-b-2 border-[#76a9dc] bg-[#333]">
        <Svg size="size-[16px]" box="0 0 16 16">
          <path d="M1 2.500 2.500 1H15v13l-1.500 1.500H1z" fill="#e2641c" />
          <path d="M2 11h13v3l-1.500 1.500H2z" fill="#a03204" />
          <path d="M1 2.500 2.500 1v14.500H1z" fill="#ff9a5a" />
          <path d="M7 9.500V3.500h4.500M7 6.500h3.500" stroke="#fff" strokeWidth="1.400" />
          <path d="M5.500 13h6" stroke="#eec" strokeDasharray="1.500 0.700" />
        </Svg>
      </button>
      <div className="ml-auto flex flex-col items-center justify-center pr-[4px] font-['Noto_Sans',sans-serif] text-[7px] leading-[12px]">
        <span>3:50 PM</span>
        <span>08/10/2024</span>
      </div>
    </footer>
  );
}

export default function App() {
  return (
    <div className="flex h-screen flex-col overflow-hidden bg-[#f3f1f5] font-[Roboto,'Liberation_Sans',sans-serif]">
      <TitleBar />
      <TabBar />
      <Ribbon />
      <main className="relative min-h-0 flex-1 overflow-hidden bg-[#848183] font-['Liberation_Sans',Arial,sans-serif]">
        <Model />
        <Browser />
        <ViewCube />
        <NavBar />
        <div className="absolute right-[8px] bottom-[5px] flex items-center gap-[10px] text-[7px] leading-[9px] text-[#e4e2e6]">
          Slider 5
          <Svg size="size-[11px]" box="0 0 11 11">
            <path d="M5.500 0a5.500 5.500 0 0 1 5.500 5.500V11H5.500a5.500 5.500 0 0 1 0-11z" fill="#111" />
            <path d="M3 7c1-3 3-4 5-2M5 4l3 1-1 3" stroke="#ccc" />
          </Svg>
        </div>
      </main>
      <Timeline />
      <Taskbar />
    </div>
  );
}
